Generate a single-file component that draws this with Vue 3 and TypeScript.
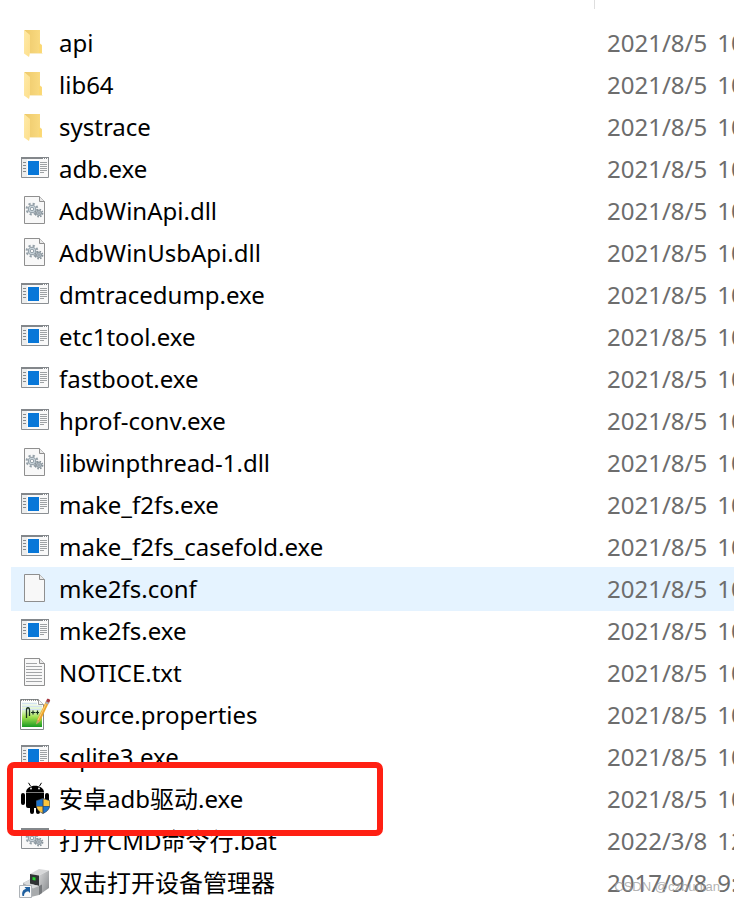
<script setup lang="ts">
type Kind = 'folder' | 'exe' | 'dll' | 'blank' | 'text' | 'notepad' | 'android' | 'bat' | 'device'

interface Entry {
  name: string
  kind: Kind
  date: string
  time: string
  hovered?: boolean
  marked?: boolean
}

const built = { date: '2021/8/5', time: '10' }

const entries: Entry[] = [
  { name: 'api', kind: 'folder', ...built },
  { name: 'lib64', kind: 'folder', ...built },
  { name: 'systrace', kind: 'folder', ...built },
  { name: 'adb.exe', kind: 'exe', ...built },
  { name: 'AdbWinApi.dll', kind: 'dll', ...built },
  { name: 'AdbWinUsbApi.dll', kind: 'dll', ...built },
  { name: 'dmtracedump.exe', kind: 'exe', ...built },
  { name: 'etc1tool.exe', kind: 'exe', ...built },
  { name: 'fastboot.exe', kind: 'exe', ...built },
  { name: 'hprof-conv.exe', kind: 'exe', ...built },
  { name: 'libwinpthread-1.dll', kind: 'dll', ...built },
  { name: 'make_f2fs.exe', kind: 'exe', ...built },
  { name: 'make_f2fs_casefold.exe', kind: 'exe', ...built },
  { name: 'mke2fs.conf', kind: 'blank', ...built, hovered: true },
  { name: 'mke2fs.exe', kind: 'exe', ...built },
  { name: 'NOTICE.txt', kind: 'text', ...built },
  { name: 'source.properties', kind: 'notepad', ...built },
  { name: 'sqlite3.exe', kind: 'exe', ...built },
  { name: '安卓adb驱动.exe', kind: 'android', ...built, marked: true },
  { name: '打开CMD命令行.bat', kind: 'bat', date: '2022/3/8', time: '12' },
  { name: '双击打开设备管理器', kind: 'device', date: '2017/9/8', time: '9:' },
]
</script>

<template>
  <main class="explorer">
    <svg class="defs" aria-hidden="true">
      <defs>
        <linearGradient id="folder-back" x1="0" x2="1" y1="0" y2="0">
          <stop offset="0" stop-color="#edc96b" />
          <stop offset="1" stop-color="#fbdc83" />
        </linearGradient>
        <linearGradient id="folder-front" x1="0" x2="1" y1="0" y2="1">
          <stop offset="0" stop-color="#ffeaa8" />
          <stop offset="1" stop-color="#fddf8c" />
        </linearGradient>
        <linearGradient id="npp-green" x1="0" x2="0" y1="0" y2="1">
          <stop offset="0" stop-color="#f4f9f5" />
          <stop offset="0.35" stop-color="#dcf3c8" />
          <stop offset="0.6" stop-color="#a3e14e" />
          <stop offset="1" stop-color="#189a22" />
        </linearGradient>
        <linearGradient id="box-side" x1="0" x2="1" y1="0" y2="1">
          <stop offset="0" stop-color="#d5d6d7" />
          <stop offset="1" stop-color="#85888b" />
        </linearGradient>
        <g id="gears" fill="none">
          <circle cx="8" cy="8" r="5.4" stroke="#94a0a8" stroke-width="2" stroke-dasharray="2.2 2.04" />
          <circle cx="8" cy="8" r="3.8" fill="#d3dde3" stroke="#8d9aa3" stroke-width="1" />
          <circle cx="8" cy="8" r="1.8" fill="#f7f8f8" stroke="#8d9aa3" stroke-width="1" />
          <circle cx="15" cy="12" r="3.6" stroke="#87939b" stroke-width="1.6" stroke-dasharray="1.6 1.23" />
          <circle cx="15" cy="12" r="2.5" fill="#bdcad2" stroke="#87939b" stroke-width="1" />
          <circle cx="15" cy="12" r="1" fill="#f7f8f8" stroke="#75828b" stroke-width="0.8" />
        </g>
        <g id="page">
          <path d="M5.500 2.500h15l5 5v22h-20z" fill="#f8f8f8" stroke="#8f8f8f" />
          <path d="M20.500 2.500v5h5" fill="#e9e9e9" stroke="#8f8f8f" />
        </g>
      </defs>
    </svg>

    <table class="files">
      <colgroup>
        <col class="name-col" />
        <col />
      </colgroup>
      <thead>
        <tr>
          <th class="divided"><span class="divider"></span></th>
          <th></th>
        </tr>
      </thead>
      <tbody>
        <tr v-for="entry in entries" :key="entry.name" :class="{ hovered: entry.hovered }">
          <td class="name-cell">
            <div class="item">
              <svg class="icon" viewBox="0 0 32 32" aria-hidden="true">
                <g v-if="entry.kind === 'folder'">
                  <path d="M5 4h16v13.5l2 1.5v8H10V10z" fill="url(#folder-back)" />
                  <path d="M20 18l2.600 1.500v7.500H20z" fill="#fbd873" />
                  <path d="M5 4l6 5v18l-1 4-5-3.500z" fill="url(#folder-front)" />
                  <path d="M10 27h14l-1 .8H10z" fill="#f7e6b5" />
                </g>
                <g v-else-if="entry.kind === 'exe'">
                  <path d="M2.500 5.500h27v20h-27z" fill="#f9f9f9" stroke="#8b8f93" />
                  <path d="M2 5h28v2H2z" fill="#83878b" />
                  <path d="M24 6h1v1h-1zM26 6h1v1h-1zM28 6h1v1h-1z" fill="#fff" />
                  <path d="M3 7h5v18H3z" fill="#eceded" />
                  <path d="M4 10.500h3M4 13.500h3M4 16.500h3M4 19.500h3" stroke="#85898c" />
                  <path d="M9 9h11v14H9z" fill="#0877d8" />
                  <path d="M21 10.500h7M21 12.500h7M21 14.500h7M21 16.500h7M21 18.500h7M21 20.500h4" stroke="#9da1a4" />
                </g>
                <g v-else-if="entry.kind === 'dll'">
                  <use href="#page" />
                  <use href="#gears" x="5" y="7" />
                </g>
                <use v-else-if="entry.kind === 'blank'" href="#page" />
                <g v-else-if="entry.kind === 'text'">
                  <use href="#page" />
                  <path
                    d="M7 7.500h11M7 10.500h16M7 13.500h16M7 16.500h16M7 19.500h16M7 22.500h16M7 25.500h16"
                    stroke="#a3a5a7"
                  />
                </g>
                <g v-else-if="entry.kind === 'notepad'">
                  <path d="M1.500 1.500h18l5 5v25h-23z" fill="#fff" stroke="#82888a" />
                  <path d="M3 4h15v3h5v22H3z" fill="url(#npp-green)" />
                  <path d="M3 5.500h15M3 8.500h20M3 11.500h19" stroke="#d3e2f1" />
                  <path d="M2 2h18" stroke="#777" stroke-width="1.500" stroke-dasharray="1 1" />
                  <path d="M19.500 1.500v5h5" fill="#f5f5f5" stroke="#9a9a9a" />
                  <path d="M7.500 20v-8c0-3 3-3 3 0v6" fill="none" stroke="#18301e" stroke-width="1.300" />
                  <path d="M12 14.500h4M14 12.500v4M16.500 14.500h3.500M18.500 12.500v4" stroke="#18301e" stroke-width="1.200" />
                  <path d="M17.500 26l.8-4.500L27 3l3 1.500-8.500 18z" fill="#eba42b" />
                  <path d="M19 22L28 4" stroke="#ffd27a" stroke-width="1" />
                  <path d="M17 26.500l1.200-4.500 2.800 1.400z" fill="#c7a36c" />
                  <path d="M26 5l1-1.800 3.200 1.600-1 1.800z" fill="#a8adb9" />
                  <path d="M27 3.200l1.200-2.400q2.500-.5 3 1.500l-1 2.500z" fill="#a53a42" />
                </g>
                <g v-else-if="entry.kind === 'android'">
                  <path d="M11.500 4L9.500.8M20.500 4l2-3.200" stroke="#000" stroke-width="1" />
                  <path d="M7 10.500c0-9 18-9 18 0z" fill="#000" />
                  <circle cx="12" cy="6.500" r="0.900" fill="#fff" />
                  <circle cx="20" cy="6.500" r="0.900" fill="#fff" />
                  <path d="M7 11h18v13q0 2-2 2h-2v4q0 2-2 2t-2-2v-4h-2v4q0 2-2 2t-2-2v-4H9q-2 0-2-2z" fill="#000" />
                  <rect x="2" y="11" width="4" height="12" rx="2" fill="#000" />
                  <rect x="26" y="11" width="4" height="12" rx="2" fill="#000" />
                  <path d="M24 16l7 2.500v5q0 5-7 8.500-7-3.500-7-8.500v-5z" fill="#3b4754" />
                  <path d="M23.500 17v7H17.600v-5z" fill="#1d75ce" />
                  <path d="M24.500 17v7h6v-5z" fill="#fbc43c" />
                  <path d="M17.700 24.500h5.800V31q-5-2.500-5.800-6.500z" fill="#fbc43c" />
                  <path d="M30.300 24.500h-5.800V31q5-2.500 5.800-6.500z" fill="#1d75ce" />
                </g>
                <g v-else-if="entry.kind === 'bat'">
                  <path d="M2.500 4.500h27v20h-27z" fill="#f8f8f8" stroke="#8b8f93" />
                  <path d="M2 4h28v2H2z" fill="#83878b" />
                  <use href="#gears" x="5" y="6" />
                </g>
                <g v-else>
                  <path d="M11 8l9-5 10 1.500-10 5z" fill="#d7d8d9" />
                  <path d="M20 9.500l10-5V22l-10 7z" fill="url(#box-side)" />
                  <path d="M11 8l9 1.500V20l-9-2z" fill="#303334" />
                  <path d="M13.500 11l3 .6v3l-3-.6z" fill="#25d52e" />
                  <path d="M4 17l7-3.500v4l9 2.500v9l-8 2-8-5z" fill="#a8abad" />
                  <path d="M4 17l7-3.500v4.500l9 2-6 2.500z" fill="#dadbdc" />
                  <path d="M20 20l3-1.500V27l-3 2z" fill="#76797c" />
                  <path d="M.5 19.500h12v12H.5z" fill="#fafafa" stroke="#aeb3b8" />
                  <path d="M3.500 30c-1-4 .5-6.500 3.500-7.300L5.500 21H11v6l-1.800-1.800C6.500 25.800 5 27 5 30z" fill="#20609f" />
                </g>
              </svg>
              <span>{{ entry.name }}</span>
            </div>
            <span v-if="entry.marked" class="marker"></span>
          </td>
          <td class="date-cell">
            <div class="stamp">
              <span>{{ entry.date }}</span>
              <span>{{ entry.time }}</span>
            </div>
          </td>
        </tr>
      </tbody>
    </table>

    <span class="watermark">CSDN @czbunian</span>
  </main>
</template>

<style>
body {
  margin: 0;
  background: #fff;
}
</style>

<style scoped>
.explorer {
  position: relative;
  box-sizing: border-box;
  height: 100vh;
  padding-left: 11px;
  overflow: hidden;
  background: #fff;
  color: #000;
  font: 24px/42px 'Noto Sans', 'Noto Sans CJK SC', sans-serif;
}

.defs {
  position: absolute;
  width: 0;
  height: 0;
}

.files {
  width: 100%;
  table-layout: fixed;
  border-collapse: collapse;
}

.name-col {
  width: 584px;
}

th,
td {
  padding: 0;
  text-align: left;
}

thead tr {
  height: 22px;
}

.divided {
  line-height: 0;
  vertical-align: top;
}

.divider {
  display: block;
  height: 9px;
  border-right: 1px solid #dedede;
}

tbody tr {
  height: 42px;
}

.hovered {
  background: #e5f3ff;
  box-shadow: 0 -1px #e5f3ff, 0 1px #e5f3ff;
}

.name-cell {
  position: relative;
}

.item {
  display: flex;
  gap: 8px;
  height: 42px;
  padding-left: 8px;
  white-space: nowrap;
}

.icon {
  flex: none;
  width: 32px;
  height: 32px;
  margin-top: 4px;
}

.date-cell {
  padding-left: 12px;
  overflow: hidden;
  color: #6d6d6d;
  white-space: nowrap;
}

.stamp {
  display: flex;
  gap: 10px;
}

.marker {
  position: absolute;
  z-index: 1;
  top: -16px;
  left: -4px;
  box-sizing: border-box;
  width: 376px;
  height: 74px;
  border: 6px solid #ff2013;
  border-radius: 7px;
  pointer-events: none;
}

.watermark {
  position: absolute;
  right: 14px;
  bottom: 6px;
  color: #a0a0a0cc;
  font: 13px/18px 'Liberation Sans', sans-serif;
}
</style>
